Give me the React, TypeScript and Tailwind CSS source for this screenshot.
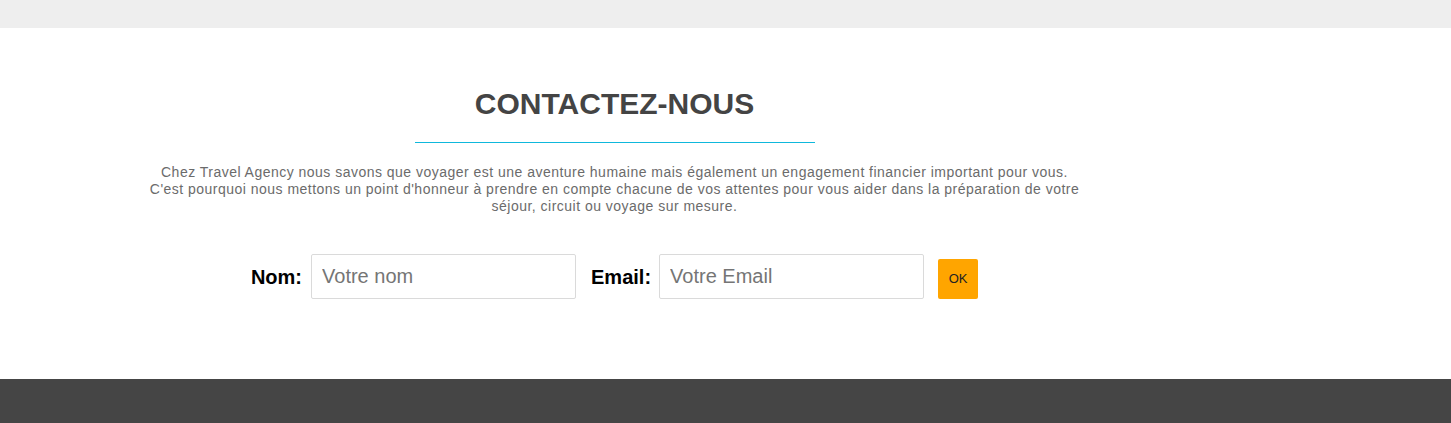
import React from 'react';

function ContactForm() {
  return (
    <div className="flex items-center justify-center">
      <label htmlFor="nom" className="text-[20px] font-bold text-black mr-[9px]">
        Nom:
      </label>
      <input
        id="nom"
        type="text"
        placeholder="Votre nom"
        className="w-[265px] h-[45px] border border-[#dadada] rounded-[2px] px-[10px] text-[20px] text-[#333] placeholder:text-[#757575] outline-none"
      />
      <label htmlFor="email" className="text-[20px] font-bold text-black ml-[15px] mr-[8px]">
        Email:
      </label>
      <input
        id="email"
        type="email"
        placeholder="Votre Email"
        className="w-[265px] h-[45px] border border-[#dadada] rounded-[2px] px-[10px] text-[20px] text-[#333] placeholder:text-[#757575] outline-none"
      />
      <button
        type="submit"
        className="self-end ml-[14px] w-[40px] h-[40px] bg-[#ffa500] rounded-[2px] text-[13px] text-[#222]"
      >
        OK
      </button>
    </div>
  );
}

function App() {
  return (
    <div className="min-h-screen bg-white font-['Liberation_Sans',Arial,sans-serif]">
      {/* top strip */}
      <div className="h-[28px] bg-[#eeeeee]"></div>

      <section id="contact" className="pt-[59px] pb-[80px]">
        <div className="w-[1229px]">
          <h2 className="text-center text-[30px] leading-[34px] font-bold text-[#444444]">
            CONTACTEZ-NOUS
          </h2>
          <div className="mx-auto mt-[21px] w-[400px] h-px bg-[#0fb8dc]"></div>
          <p className="mx-auto mt-[21px] w-[960px] text-center text-[14px] leading-[17px] tracking-[0.48px] text-[#6b6b6b]">
            Chez Travel Agency nous savons que voyager est une aventure humaine mais également un engagement financier important pour vous.
            <br />
            C'est pourquoi nous mettons un point d'honneur à prendre en compte chacune de vos attentes pour vous aider dans la préparation de votre
            <br />
            séjour, circuit ou voyage sur mesure.
          </p>
          <div className="mt-[39px]">
            <ContactForm />
          </div>
        </div>
      </section>

      {/* footer */}
      <footer className="h-[44px] bg-[#454545]"></footer>
    </div>
  );
}

export default App;
